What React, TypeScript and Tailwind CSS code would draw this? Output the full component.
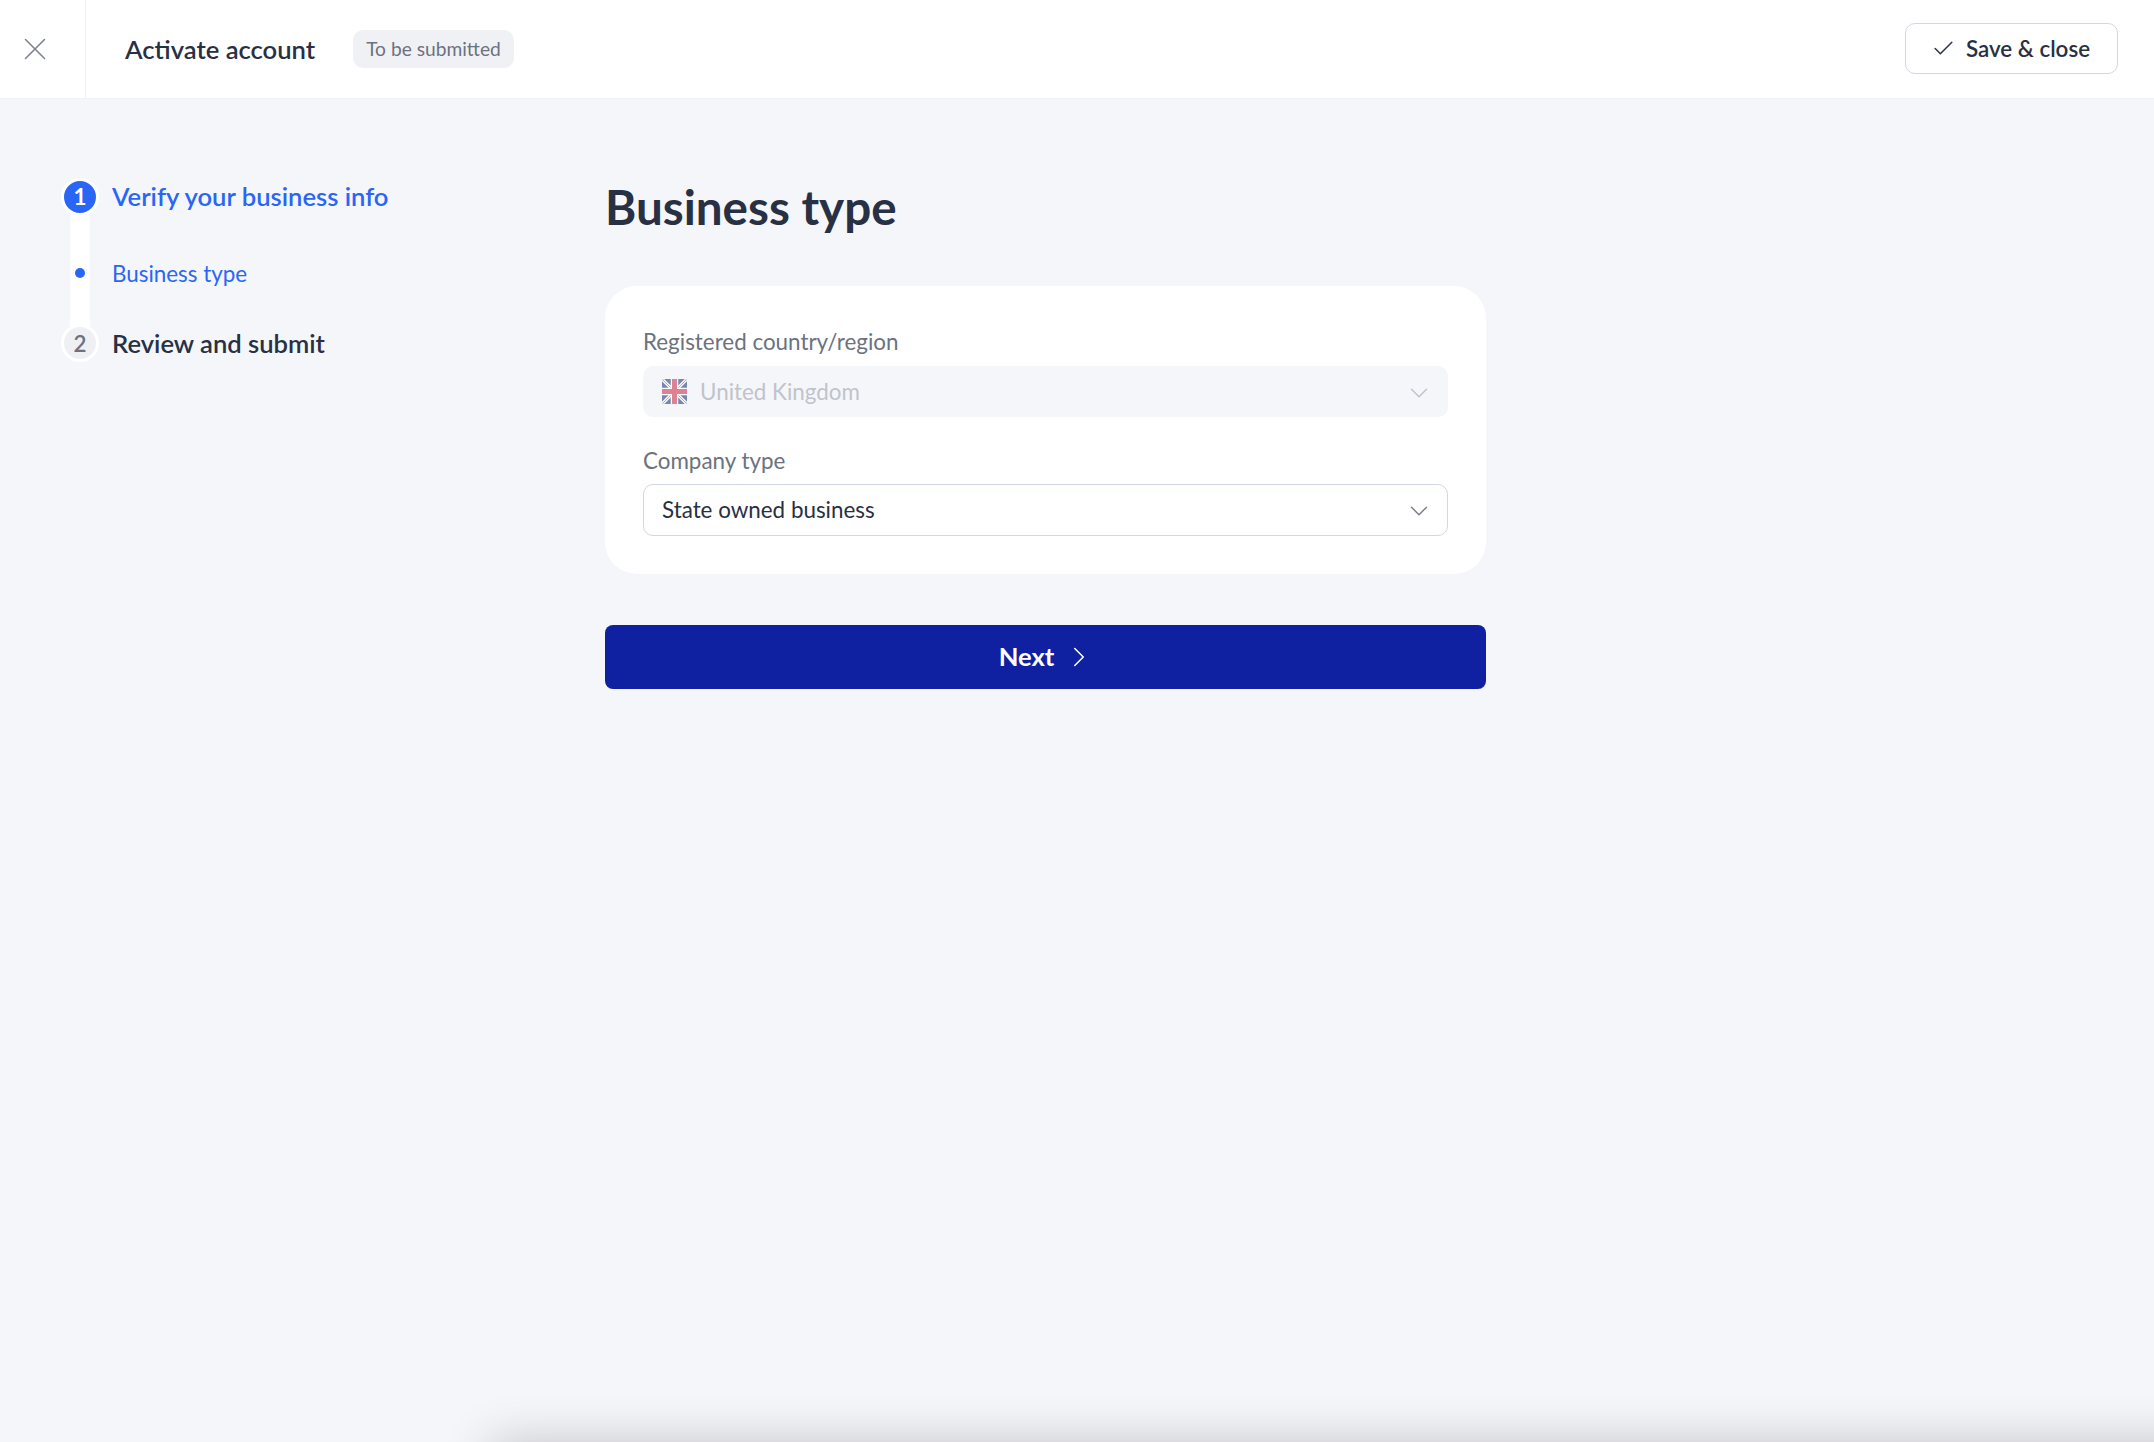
import { Check, ChevronDown, ChevronRight, X } from "lucide-react";

function UkFlag() {
  return (
    <svg width="25" height="25" viewBox="0 0 25 25" className="rounded-[2px] opacity-50">
      <rect width="25" height="25" fill="#001b69" />
      <path d="M0 0L25 25M25 0L0 25" stroke="#fff" strokeWidth="3.2" />
      <path d="M0 0L25 25M25 0L0 25" stroke="#c8102e" strokeWidth="0.8" />
      <path d="M12.5 0V25M0 12.5H25" stroke="#fff" strokeWidth="7.5" />
      <path d="M12.5 0V25M0 12.5H25" stroke="#c8102e" strokeWidth="5" />
    </svg>
  );
}

function Steps() {
  return (
    <nav className="relative w-[500px] pl-[61px] pt-[79px]">
      <div className="absolute left-[70px] top-[91px] h-[150px] w-[20px] bg-white" />
      <div className="relative flex h-[38px] items-center">
        <div className="flex h-[38px] w-[38px] items-center justify-center rounded-full border-[3px] border-white bg-[#2a66f6] text-[22.4px] font-bold text-white">
          1
        </div>
        <span className="ml-[13px] pb-[2px] text-[25.6px] font-semibold text-[#2a66f6]">Verify your business info</span>
      </div>
      <div className="relative mt-[39px] flex h-[36px] items-center">
        <div className="ml-[14px] h-[10px] w-[10px] rounded-full bg-[#2a66f6]" />
        <span className="ml-[27px] pt-[2px] text-[22.4px] text-[#2a66f6]">Business type</span>
      </div>
      <div className="relative mt-[33px] flex h-[38px] items-center">
        <div className="flex h-[38px] w-[38px] items-center justify-center rounded-full border-[3px] border-white bg-[#eff0f4] pt-[1px] text-[22.4px] font-semibold text-[#6b7280]">
          2
        </div>
        <span className="ml-[13px] text-[25.6px] font-semibold text-[#283044]">Review and submit</span>
      </div>
    </nav>
  );
}

export default function App() {
  return (
    <div className="relative h-[1442px] overflow-hidden bg-[#f5f6fa] font-['Lato',sans-serif]">
      <header className="flex h-[99px] items-center border-b border-[#f0f1f5] bg-white">
        <div className="flex h-full w-[86px] items-center border-r border-[#f0f1f5] pl-[16px]">
          <X size={38} strokeWidth={1} className="text-[#7c818c]" />
        </div>
        <h1 className="ml-[39px] text-[25.6px] font-semibold text-[#283044]">Activate account</h1>
        <span className="ml-[38px] flex h-[38px] items-center rounded-[10px] bg-[#f0f1f5] px-[13px] text-[19.2px] text-[#6b7280]">
          To be submitted
        </span>
        <button className="mb-[1px] ml-auto mr-[36px] flex h-[51px] w-[213px] items-center justify-center rounded-[10px] border border-[#d3d7e3] bg-white pr-[2px] text-[22.4px] font-semibold text-[#283044]">
          <Check size={25} strokeWidth={1.4} className="mr-[10px]" />
          Save &amp; close
        </button>
      </header>
      <div className="flex">
        <Steps />
        <main className="ml-[105px] w-[881px] pt-[78px]">
          <h2 className="text-[47.6px] font-bold leading-[60px] text-[#283044]">Business type</h2>
          <section className="mt-[49px] h-[288px] rounded-[32px] bg-white px-[38px] pt-[42px]">
            <label className="block h-[38px] text-[22.4px] leading-[28px] text-[#6b7280]">Registered country/region</label>
            <div className="flex h-[51px] items-center rounded-[10px] bg-[#f5f6fa] pl-[19px] pr-[14px]">
              <UkFlag />
              <span className="ml-[13px] text-[22.4px] text-[#c0c3cb]">United Kingdom</span>
              <ChevronDown size={30} strokeWidth={1.2} className="ml-auto mt-[2px] text-[#c0c3cb]" />
            </div>
            <label className="mt-[30px] block h-[37px] text-[22.4px] leading-[28px] text-[#6b7280]">Company type</label>
            <div className="flex h-[52px] items-center rounded-[10px] border border-[#d3d7e3] bg-white pl-[18px] pr-[13px]">
              <span className="text-[22.4px] text-[#283044]">State owned business</span>
              <ChevronDown size={30} strokeWidth={1.2} className="ml-auto mt-[2px] text-[#7c818c]" />
            </div>
          </section>
          <button className="mt-[51px] flex h-[64px] w-full items-center justify-center rounded-[8px] bg-[#0f21a1] pl-[4px] text-[25.6px] font-bold text-white">
            <span className="pb-[2px]">Next</span>
            <ChevronRight size={34} strokeWidth={1.1} className="ml-[8px]" />
          </button>
        </main>
      </div>
      <div className="absolute left-[490px] right-[-100px] top-[1442px] h-[100px] shadow-[0_0_50px_rgba(0,0,0,0.2)]" />
    </div>
  );
}
